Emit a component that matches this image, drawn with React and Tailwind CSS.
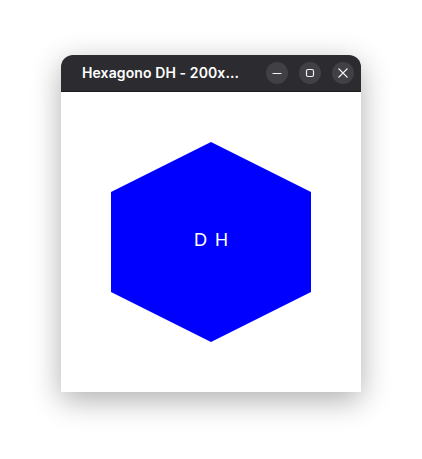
export default function App() {
  return (
    <div className="w-[422px] h-[459px] bg-white flex justify-center items-start pt-[55px]">
      <div className="w-[300px] flex flex-col rounded-t-[12px] overflow-hidden shadow-[0_8px_30px_rgba(0,0,0,0.32)]">
        <div className="h-[37px] bg-[#2c2c30] border-b border-[#1c1c1e] flex items-center pl-[21px] pr-[7px]">
          <span className="flex-1 text-white text-[14px] font-semibold font-['Inter',sans-serif] tracking-[0.1px] leading-none">
            Hexagono DH - 200x...
          </span>
          <div className="flex items-center gap-[11px]">
            <div className="w-[22px] h-[22px] rounded-full bg-[#404045] flex items-center justify-center">
              <svg width="12" height="12" viewBox="0 0 12 12">
                <path d="M1.5 6.5h9" stroke="#f2f2f2" strokeWidth="1.2" />
              </svg>
            </div>
            <div className="w-[22px] h-[22px] rounded-full bg-[#404045] flex items-center justify-center">
              <svg width="12" height="12" viewBox="0 0 12 12">
                <rect x="2.5" y="2.5" width="7" height="7" rx="1.5" fill="none" stroke="#f2f2f2" strokeWidth="1.2" />
              </svg>
            </div>
            <div className="w-[22px] h-[22px] rounded-full bg-[#404045] flex items-center justify-center">
              <svg width="12" height="12" viewBox="0 0 12 12">
                <path d="M1.5 1.5l9 9M10.5 1.5l-9 9" stroke="#f2f2f2" strokeWidth="1.1" />
              </svg>
            </div>
          </div>
        </div>
        <div className="h-[300px] bg-white flex items-center justify-center">
          <div className="relative w-[200px] h-[200px] flex items-center justify-center">
            <svg className="absolute inset-0" width="200" height="200" viewBox="0 0 200 200">
              <polygon points="100,0 200,50 200,150 100,200 0,150 0,50" fill="#0000ff" />
            </svg>
            <span className="relative text-white text-[18px] tracking-[1.5px] pl-[1.5px] font-['Liberation_Sans',Arial,sans-serif] leading-none -mt-[4px]">
              D H
            </span>
          </div>
        </div>
      </div>
    </div>
  );
}
